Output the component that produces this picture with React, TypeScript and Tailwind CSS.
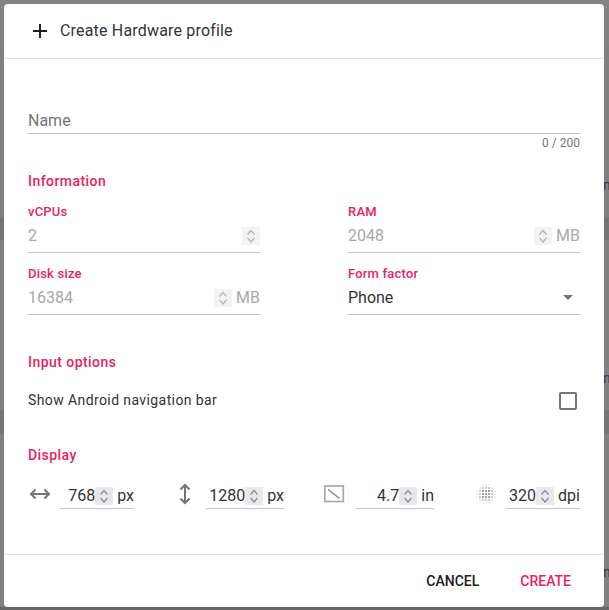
const Spin = ({ faded }: { faded?: boolean }) => (
  <span className={`flex h-[18px] w-[18px] shrink-0 items-center justify-center ${faded ? "bg-[#f3f3f6]" : "bg-[#e9e9ed]"}`}>
    <svg width="18" height="18" viewBox="0 0 18 18" fill="none" stroke={faded ? "#b4b4b4" : "#8a8a8a"} strokeWidth="1.2">
      <path d="M5.5 7.500 9 3.500l3.500 4" />
      <path d="M5.500 11 9 15l3.500-4" />
    </svg>
  </span>
);

const Label = ({ children }: { children: string }) => (
  <div className="h-[15px] text-[13px] leading-[15px] font-medium tracking-[0.2px] text-[#e91e63]">{children}</div>
);

const Section = ({ children, className }: { children: string; className: string }) => (
  <div className={`text-[14px] leading-[20px] font-medium tracking-[0.45px] text-[#e91e63] ${className}`}>{children}</div>
);

const Disabled = ({ label, value, unit }: { label: string; value: string; unit?: string }) => (
  <div>
    <Label>{label}</Label>
    <div className="flex h-[34px] items-center border-b border-[#c4c4c4] text-[16px] text-[#a8a8a8]">
      <span className="flex-1">{value}</span>
      <Spin faded />
      {unit && <span className="ml-1">{unit}</span>}
    </div>
  </div>
);

const Dim = ({ value, unit, width, icon, gap, className }: { value: string; unit: string; width: string; icon: React.ReactNode; gap: string; className?: string }) => (
  <div className={`flex items-start ${className ?? ""}`}>
    <span className={`flex w-6 justify-center ${gap}`}>{icon}</span>
    <div className={`flex h-[25px] items-center justify-end border-b border-[#c4c4c4] text-[16px] text-[#333333] ${width}`}>
      <span>{value}</span>
      <Spin />
      <span className="ml-1">{unit}</span>
    </div>
  </div>
);

const dots: [number, number, number][] = [];
for (let x = 0; x < 7; x++) {
  for (let y = 0; y < 7; y++) {
    const d = Math.hypot(x - 3, y - 3);
    if (d < 3.3) dots.push([x, y, d < 1.5 ? 1 : d < 2.5 ? 0.75 : 0.45]);
  }
}

export default function App() {
  return (
    <div className="relative h-[610px] w-[609px] overflow-hidden bg-[#808080] font-['Roboto',sans-serif]">
      <div className="flex h-full flex-col">
        <div className="h-[47px] bg-[#848484]" />
        <div className="mt-[170px] h-[23px] bg-[#767676]" />
        <div className="mt-[170px] h-[24px] bg-[#767676]" />
        <div className="mt-auto h-[3px] bg-[#666666]" />
      </div>
      <span className="absolute left-[603px] top-[176px] text-[14px] leading-[18px] text-[#29384f]">n</span>
      <span className="absolute left-[603px] top-[369px] text-[14px] leading-[18px] text-[#29384f]">n</span>
      <span className="absolute left-[603px] top-[563px] text-[14px] leading-[18px] text-[#29384f]">n</span>
      <div className="absolute left-1 top-1 flex h-[603px] w-[600px] flex-col rounded-[4px] bg-white">
        <header className="flex h-[55px] shrink-0 items-center border-b border-[#e0e0e0] pl-6">
          <svg width="24" height="24" viewBox="0 0 24 24" fill="#212121">
            <path d="M19 13h-6v6h-2v-6H5v-2h6V5h2v6h6z" />
          </svg>
          <span className="ml-[8px] text-[16px] tracking-[0.18px] text-[#333333]">Create Hardware profile</span>
        </header>

        <main className="flex-1 px-6">
          <div className="mt-[49px] flex h-[26px] items-center border-b border-[#c4c4c4] text-[16px] text-[#757575]">Name</div>
          <div className="mt-[2px] text-right text-[12px] leading-[14px] text-[#757575]">0 / 200</div>

          <Section className="mt-[21px]">Information</Section>
          <div className="mt-[13px] grid grid-cols-[232px_232px] justify-between gap-y-[13px]">
            <Disabled label="vCPUs" value="2" />
            <Disabled label="RAM" value="2048" unit="MB" />
            <Disabled label="Disk size" value="16384" unit="MB" />
            <div>
              <Label>Form factor</Label>
              <div className="flex h-[34px] items-center justify-between border-b border-[#c4c4c4] pr-[7px] text-[16px] text-[#333333]">
                <span>Phone</span>
                <span className="h-0 w-0 border-x-[5px] border-t-[5px] border-x-transparent border-t-[#757575]" />
              </div>
            </div>
          </div>

          <Section className="mt-[37px]">Input options</Section>
          <div className="mt-[16px] flex h-[24px] items-center justify-between pr-[3px]">
            <span className="text-[14px] tracking-[0.4px] text-[#333333]">Show Android navigation bar</span>
            <span className="mt-[2px] h-[18px] w-[18px] rounded-[2px] border-2 border-[#757575]" />
          </div>

          <Section className="mt-[33px]">Display</Section>
          <div className="mt-[19px] flex">
            <Dim
              value="768"
              unit="px"
              width="w-[74px]"
              gap="mr-[8px]"
              icon={
                <svg width="24" height="24" viewBox="0 0 24 24" fill="none" stroke="#757575" strokeWidth="2">
                  <path d="M3 10h18" />
                  <path d="M7.500 5.500 3 10l4.500 4.500" />
                  <path d="M16.500 5.500 21 10l-4.500 4.500" />
                </svg>
              }
            />
            <Dim
              className="ml-[39px]"
              value="1280"
              unit="px"
              width="w-[78px]"
              gap="mr-[9px]"
              icon={
                <svg width="24" height="24" viewBox="0 0 24 24" fill="none" stroke="#757575" strokeWidth="2" className="-mt-[2px]">
                  <path d="M12 3v18" />
                  <path d="M7.500 7.500 12 3l4.500 4.500" />
                  <path d="M7.500 16.500 12 21l4.500-4.500" />
                </svg>
              }
            />
            <Dim
              className="ml-[39px]"
              value="4.7"
              unit="in"
              width="w-[78px]"
              gap="mr-[9px]"
              icon={
                <svg width="24" height="24" viewBox="0 0 24 24" fill="none">
                  <rect x="1.800" y="2" width="18.500" height="15.500" stroke="#a8a8a8" strokeWidth="1.700" />
                  <path d="M5 5.500 16.500 14.500" stroke="#8a8a8a" strokeWidth="1.500" />
                </svg>
              }
            />
            <Dim
              className="ml-[40px]"
              value="320"
              unit="dpi"
              width="w-[74px]"
              gap="mr-[8px]"
              icon={
                <svg width="24" height="24" viewBox="0 0 24 24" fill="#858585" className="-mt-[2px]">
                  {dots.map(([x, y, r]) => (
                    <circle key={`${x}-${y}`} cx={3 + x * 3} cy={3 + y * 3} r={r} />
                  ))}
                </svg>
              }
            />
          </div>
        </main>

        <footer className="flex h-[53px] shrink-0 items-center justify-end gap-[41px] border-t border-[#e0e0e0] pr-[33px] text-[14px] font-medium">
          <span className="text-[#212121]">CANCEL</span>
          <span className="text-[#e91e63]">CREATE</span>
        </footer>
      </div>
    </div>
  );
}
